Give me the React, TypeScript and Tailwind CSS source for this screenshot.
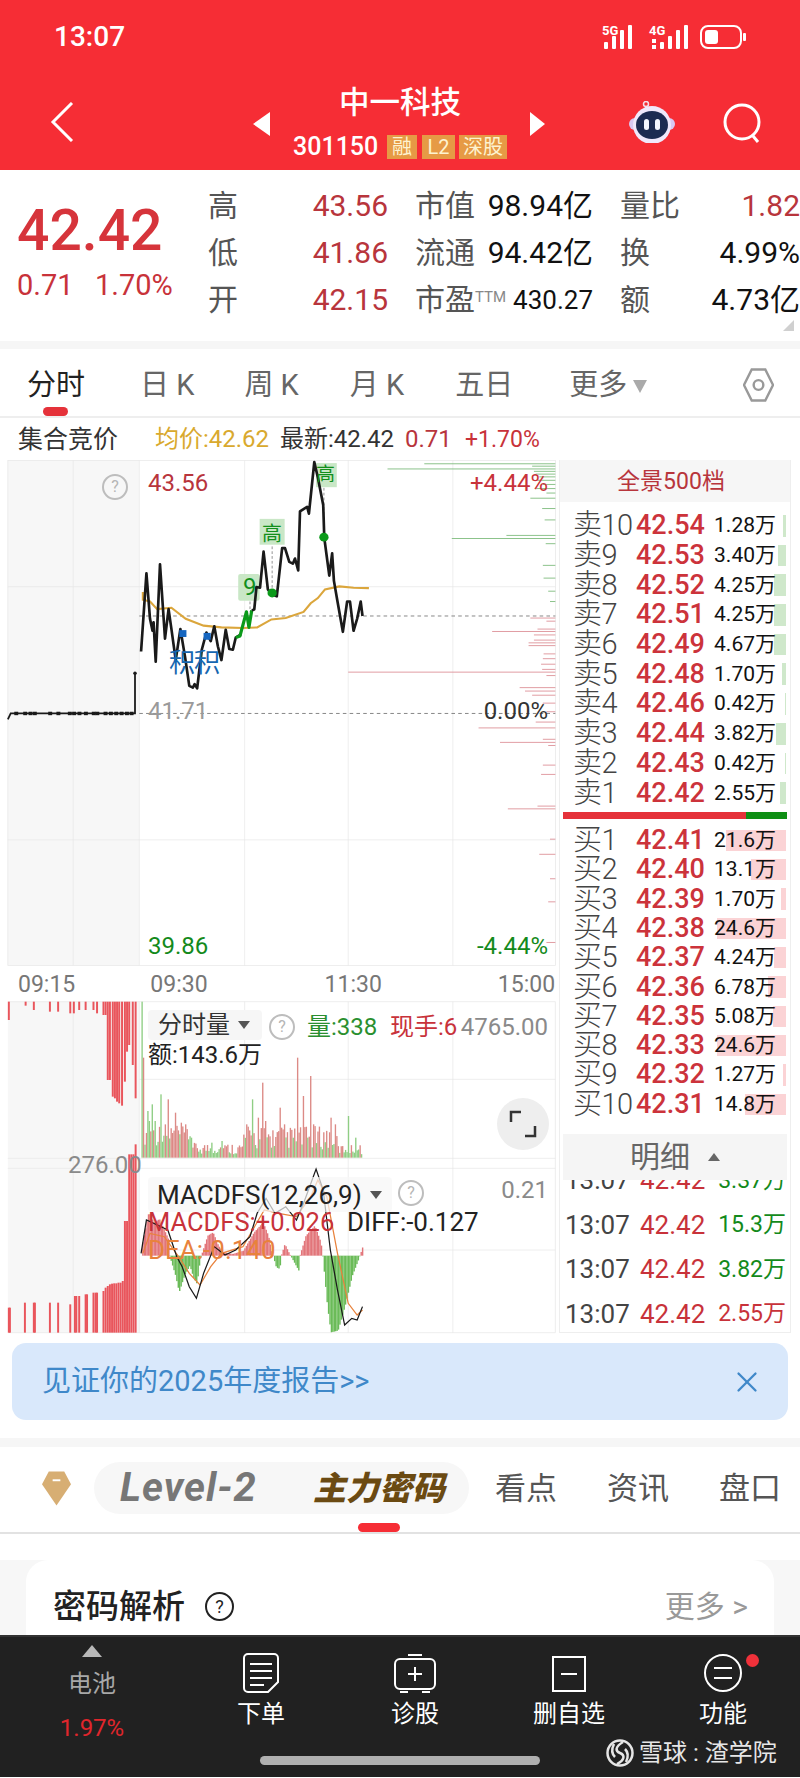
import { X } from "lucide-react"

const sells = [
  ["卖10", "42.54", "1.28万", 3],
  ["卖9", "42.53", "3.40万", 8],
  ["卖8", "42.52", "4.25万", 12],
  ["卖7", "42.51", "4.25万", 12],
  ["卖6", "42.49", "4.67万", 12],
  ["卖5", "42.48", "1.70万", 4],
  ["卖4", "42.46", "0.42万", 1],
  ["卖3", "42.44", "3.82万", 10],
  ["卖2", "42.43", "0.42万", 1],
  ["卖1", "42.42", "2.55万", 6],
] as const

const buys = [
  ["买1", "42.41", "21.6万", 60],
  ["买2", "42.40", "13.1万", 35],
  ["买3", "42.39", "1.70万", 5],
  ["买4", "42.38", "24.6万", 69],
  ["买5", "42.37", "4.24万", 12],
  ["买6", "42.36", "6.78万", 18],
  ["买7", "42.35", "5.08万", 13],
  ["买8", "42.33", "24.6万", 69],
  ["买9", "42.32", "1.27万", 3],
  ["买10", "42.31", "14.8万", 41],
] as const

// depth ticks on the right edge of the price chart: y, start x (zoomed coords)
const greenTicks = [[40, 1188], [47, 1490], [55, 1085], [62, 1495], [70, 1500], [78, 1510], [88, 1505], [100, 1520], [112, 1500], [125, 1530], [140, 1485], [170, 1518], [203, 1525], [248, 1418], [257, 1265], [272, 1528], [335, 1520], [372, 1522], [410, 1535], [440, 1540]]
const redTicks = [[488, 1485], [497, 1530], [520, 1505], [527, 1378], [537, 1495], [552, 1495], [560, 1480], [568, 1480], [592, 1522], [606, 1520], [622, 1515], [637, 1518], [645, 975], [655, 1530], [690, 1455], [700, 1470], [712, 1490], [735, 1520], [760, 1530], [790, 1500], [807, 1340], [840, 1520], [849, 1400], [858, 1535], [915, 1520], [942, 1515], [1034, 1505], [1042, 1422], [1130, 1540], [1174, 1510], [1245, 1540], [1312, 1535], [1430, 1530]]

const topBars = [[25, 55], [72, 12], [95, 25], [140, 30], [163, 30], [197, 35], [207, 35], [222, 25], [240, 25], [262, 25], [272, 35], [290, 40], [296, 40], [302, 235], [308, 235], [316, 285], [322, 290], [328, 300], [334, 305], [342, 312], [350, 240], [356, 150], [362, 130], [372, 190], [380, 290]]
const bottomBars = [[25, 75], [28, 75], [70, 90], [95, 90], [98, 90], [140, 90], [163, 90], [197, 85], [210, 110], [214, 110], [222, 110], [240, 115], [244, 115], [262, 120], [268, 120], [272, 120], [290, 125], [296, 135], [302, 140], [308, 145], [314, 147], [320, 148], [326, 148], [332, 150], [338, 150], [344, 155], [350, 335], [356, 335], [362, 535], [368, 535], [374, 535], [380, 565]]

const volPeaks: Record<number, number> = { 0: 468, 1: 300, 4: 140, 5: 110, 7: 160, 9: 110, 13: 190, 18: 175, 23: 135, 30: 100, 34: 60, 48: 45, 55: 50, 72: 100, 76: 175, 80: 120, 83: 225, 85: 110, 95: 150, 98: 100, 107: 300, 111: 185, 116: 245, 118: 100, 130: 120, 133: 100, 142: 125, 147: 60 }

const volBars = Array.from({ length: 152 }, (_, i) => {
  const seed = Math.abs(Math.sin(i * 12.9898) * 43758.5453) % 1
  const base = i < 35 ? 35 + seed * 70 : i < 70 ? 10 + seed * 35 : i < 135 ? 25 + seed * 70 : 10 + seed * 30
  return { x: 396 + i * 4.07, h: volPeaks[i] ?? base, red: seed > 0.52 }
})

const macdEnvelope = [[398, -40], [415, -130], [430, -100], [445, -110], [470, -50], [473, 0], [490, 60], [500, 110], [515, 60], [530, 30], [540, 65], [550, 85], [558, 20], [562, 0], [580, -60], [595, -70], [610, -30], [625, -10], [650, -5], [680, -15], [710, -70], [735, -100], [750, -60], [760, -10], [763, 0], [772, 35], [782, 40], [786, 0], [796, -35], [808, -8], [812, 0], [835, 45], [838, 0], [855, -60], [880, -90], [897, -40], [902, 0], [915, 150], [925, 230], [945, 225], [965, 150], [985, 60], [1003, 10], [1006, 0], [1015, -30]]

function macdAt(x: number) {
  for (let i = 1; i < macdEnvelope.length; i++) {
    const [x0, v0] = macdEnvelope[i - 1]
    const [x1, v1] = macdEnvelope[i]
    if (x <= x1) return v0 + ((v1 - v0) * (x - x0)) / (x1 - x0)
  }
  return 0
}

const macdBars = Array.from({ length: 156 }, (_, i) => {
  const x = 398 + i * 3.97
  return { x, v: macdAt(x) }
})

function Help({ className }: { className: string }) {
  return (
    <div className={`absolute flex size-[26px] items-center justify-center rounded-full border-2 border-[#bdbdbd] text-[16px] leading-none text-[#b5b5b5] ${className}`}>?</div>
  )
}

function Caret() {
  return <span className="ml-[8px] inline-block size-0 border-x-[6px] border-t-[8px] border-x-transparent border-t-[#555]" />
}

function BookRow({ row, color, h }: { row: readonly [string, string, string, number]; color: string; h: string }) {
  return (
    <div className={`relative flex items-center ${h}`}>
      <div className="absolute inset-y-[4px] right-[4px]" style={{ width: row[3], backgroundColor: color }} />
      <span className="relative w-[76px] pl-[13px] text-[29px] leading-none font-light tracking-[-0.5px] whitespace-nowrap text-[#444]">{row[0]}</span>
      <span className="relative w-[70px] text-[27px] leading-none font-medium text-[#cc333b]">{row[1]}</span>
      <span className="relative w-[70px] text-right text-[21px] leading-none text-[#111]">{row[2]}</span>
    </div>
  )
}

function Tick({ qty, qtyColor }: { qty: string; qtyColor: string }) {
  return (
    <div className="flex h-[44.5px] items-center pl-[5px]">
      <span className="w-[75px] text-[26px] leading-none text-[#444]">13:07</span>
      <span className="w-[72px] text-[26px] leading-none text-[#c8323a]">42.42</span>
      <span className="w-[74px] text-right text-[23px] leading-none" style={{ color: qtyColor }}>{qty}</span>
    </div>
  )
}

function Quote({ label, value, valueClass = "text-[#111]" }: { label: React.ReactNode; value: string; valueClass?: string }) {
  return (
    <div className="flex items-center justify-between whitespace-nowrap">
      <span className="text-[30px] leading-none text-[#555]">{label}</span>
      <span className={`text-[30px] leading-none ${valueClass}`}>{value}</span>
    </div>
  )
}

export default function App() {
  return (
    <div className="relative h-[1778px] w-[800px] overflow-hidden bg-white font-['Roboto','Noto_Sans_CJK_SC',sans-serif]">
      {/* red header */}
      <header className="relative h-[170px] bg-[#f62d35] text-white">
        <div className="flex h-[74px] items-center justify-between pr-[52px] pl-[54px]">
          <span className="text-[28px] font-medium">13:07</span>
          <svg viewBox="0 0 146 28" className="h-[28px] w-[146px]" fill="#fff">
            <text x="0" y="12" fontSize="13" fontWeight="700" fontFamily="Roboto">5G</text>
            <rect x="2" y="19" width="4" height="7" rx="1" /><rect x="10" y="13" width="4" height="13" rx="1" /><rect x="18" y="7" width="4" height="19" rx="1" /><rect x="26" y="2" width="4" height="24" rx="1" />
            <text x="47" y="12" fontSize="13" fontWeight="700" fontFamily="Roboto">4G</text>
            <rect x="50" y="16" width="4" height="4" /><rect x="50" y="22" width="4" height="4" /><rect x="58" y="19" width="4" height="7" rx="1" /><rect x="66" y="13" width="4" height="13" rx="1" /><rect x="74" y="7" width="4" height="19" rx="1" /><rect x="82" y="2" width="4" height="24" rx="1" />
            <rect x="99" y="3" width="40" height="22" rx="7" fill="none" stroke="#fff" strokeWidth="2" />
            <rect x="103" y="7" width="13" height="14" rx="3" />
            <rect x="141" y="10" width="3" height="8" rx="1" />
          </svg>
        </div>
        <svg viewBox="0 0 24 40" className="absolute top-[102px] left-[50px] h-[40px] w-[24px]" fill="none" stroke="#fff" strokeWidth="3"><path d="M22 1 3 20l19 19" /></svg>
        <div className="absolute top-[112px] left-[253px] h-0 w-0 border-y-[12px] border-r-[17px] border-y-transparent border-r-white" />
        <div className="absolute top-[112px] left-[530px] h-0 w-0 border-y-[12px] border-l-[15px] border-y-transparent border-l-white" />
        <div className="absolute top-[86px] left-[339px] text-[30.5px] leading-[34px] font-medium">中一科技</div>
        <div className="absolute top-[135px] left-[293px] flex items-center">
          <span className="w-[90px] text-[25px] leading-[24px] font-medium">301150</span>
          <span className="ml-[4px] flex h-[24px] w-[30px] items-center justify-center bg-[#e69a45] text-[20px] text-[#fdf3d0]">融</span>
          <span className="ml-[5px] flex h-[24px] w-[33px] items-center justify-center bg-[#e69a45] text-[20px] text-[#fdf3d0]">L2</span>
          <span className="ml-[4px] flex h-[24px] w-[48px] items-center justify-center bg-[#e69a45] text-[20px] text-[#fdf3d0]">深股</span>
        </div>
        <svg viewBox="0 0 48 42" className="absolute top-[101px] left-[628px] h-[42px] w-[48px]">
          <circle cx="18" cy="3" r="2.5" fill="none" stroke="#f3dfe8" strokeWidth="1.5" />
          <path d="M18 5v4" stroke="#f3dfe8" strokeWidth="2" />
          <rect x="1" y="17" width="46" height="12" rx="6" fill="#d9c8f2" />
          <circle cx="24" cy="24" r="19" fill="#f0e8fb" />
          <ellipse cx="24" cy="24" rx="16" ry="14" fill="#1d2b52" />
          <rect x="16" y="18" width="5" height="11" rx="2.5" fill="#f4f6ff" />
          <rect x="27" y="18" width="5" height="11" rx="2.5" fill="#f4f6ff" />
        </svg>
        <svg viewBox="0 0 40 40" className="absolute top-[103px] left-[723px] size-[40px]" fill="none" stroke="#fff" strokeWidth="3"><circle cx="19" cy="19" r="17" /><path d="m30 33 5 6" /></svg>
      </header>

      {/* quote summary */}
      <section className="flex h-[171px] pt-[13px]">
        <div className="w-[208px] pt-[23px] pl-[17px]">
          <div className="text-[57px] leading-[50px] font-medium text-[#d6343b]">42.42</div>
          <div className="mt-[14px] flex text-[29px] leading-[30px] text-[#c8323a]">
            <span className="w-[78px]">0.71</span>
            <span>1.70%</span>
          </div>
        </div>
        <div className="grid h-[140px] grid-cols-[180px_178px_180px] grid-rows-3 gap-x-[27px]">
          <Quote label="高" value="43.56" valueClass="text-[#b8353c]" />
          <Quote label="市值" value="98.94亿" />
          <Quote label="量比" value="1.82" valueClass="text-[#b8353c]" />
          <Quote label="低" value="41.86" valueClass="text-[#b8353c]" />
          <Quote label="流通" value="94.42亿" />
          <Quote label="换" value="4.99%" />
          <Quote label="开" value="42.15" valueClass="text-[#b8353c]" />
          <div className="flex items-center justify-between whitespace-nowrap">
            <span className="text-[30px] leading-none text-[#555]">市盈<sup className="-top-[8px] text-[15px] text-[#888]">TTM</sup></span>
            <span className="text-[26px] leading-none text-[#111]">430.27</span>
          </div>
          <Quote label="额" value="4.73亿" />
        </div>
        <div className="absolute top-[320px] left-[783px] h-0 w-0 border-b-[11px] border-l-[11px] border-b-[#d0d0d0] border-l-transparent" />
      </section>
      <div className="h-[8px] bg-[#f6f6f6]" />

      {/* period tabs */}
      <nav className="relative flex h-[69px] items-center border-b-[2px] border-[#eeeeee] pt-[6px] pl-[27px] text-[29px] leading-none text-[#666]">
        <span className="text-[#222]">分时</span>
        <span className="ml-[55px]">日 K</span>
        <span className="ml-[50px]">周 K</span>
        <span className="ml-[51px]">月 K</span>
        <span className="ml-[51px]">五日</span>
        <span className="ml-[56px]">更多</span>
        <span className="mt-[2px] ml-[6px] h-0 w-0 border-x-[7px] border-t-[13px] border-x-transparent border-t-[#aaaaaa]" />
        <svg viewBox="0 0 32 36" className="absolute top-[18px] left-[743px] h-[36px] w-[31px]" fill="none" stroke="#999" strokeWidth="2.5"><path d="M9 2h14l8 16-8 16H9L1 18Z" /><circle cx="16" cy="18" r="5" /></svg>
        <div className="absolute bottom-[0px] left-[43px] h-[9px] w-[25px] rounded-full bg-[#e5323a]" />
      </nav>

      {/* auction info */}
      <div className="flex h-[42px] items-center pl-[18px] text-[24px] leading-none whitespace-nowrap">
        <span className="w-[137px] text-[25px] text-[#333]">集合竞价</span>
        <span className="w-[125px] text-[#d9a92e]">均价:42.62</span>
        <span className="w-[125px] text-[#333]">最新:42.42</span>
        <span className="w-[60px] text-[#b8353c]">0.71</span>
        <span className="text-[23px] text-[#c8323a]">+1.70%</span>
      </div>

      <div className="flex">
        <div className="w-[557px] shrink-0">
          {/* price chart */}
          <div className="relative h-[506px]">
            <svg viewBox="0 0 1568 1568" preserveAspectRatio="none" className="absolute -top-[10px] left-0 h-[540px] w-[560px]">
              <rect x="22" y="30" width="368" height="1467" fill="#f7f7f7" />
              <g stroke="#e6e6e6" strokeWidth="2" fill="none">
                <rect x="22" y="30" width="1533" height="1467" />
                <path d="M205 30v1467M390 30v1467M685 30v1467M975 30v1467M1268 30v1467M22 397h1533M22 1132h1533" />
              </g>
              <path d="M390 482h1165M390 765h1165" stroke="#777" strokeWidth="2.5" strokeDasharray="10 9" fill="none" />
              {greenTicks.map(([y, x]) => (
                <path key={y} d={`M${x} ${y}H1555`} stroke="#7cba7a" strokeWidth="2.5" />
              ))}
              {redTicks.map(([y, x]) => (
                <path key={y} d={`M${x} ${y}H1555`} stroke="#dd8f96" strokeWidth="2.5" />
              ))}
              <rect x="727" y="200" width="70" height="75" fill="#c9e7c6" />
              <rect x="885" y="38" width="58" height="70" fill="#c9e7c6" />
              <rect x="667" y="360" width="60" height="78" rx="6" fill="#c9e7c6" />
              <path d="M762 280v130M907 110v140M700 440v30" stroke="#666" strokeWidth="2" strokeDasharray="8 6" />
              <path d="M400 412v23l20 5 20 22 40-4 40 32 50 20 50 5 60 2 40-2 40-23 40-4 50-18 20-25 20-15 20-25 40-9 40 4 43 1" fill="none" stroke="#dba63c" strokeWidth="6" />
              <path d="M395 585 410 358l10 132 7 35 3-25 6 115 12-283 14 216 10-86 8 58 12 90 13-90 13 80 12 85 10 5 5-10 7 12 13-112 13-50 12 25 10-43 10 58 10 40 12-88 10 56 10 2 8-35 15-10" fill="none" stroke="#1a1a1a" strokeWidth="7.5" strokeLinejoin="round" />
              <path d="m660 545 12-5 18-70 7 45 8-50" fill="none" stroke="#0b9a1a" strokeWidth="9" strokeLinejoin="round" />
              <path d="m705 465 7-2 6-65 10 2 10-105 12 110 12 15 13 5 15-140h8l12 40 10 5 6-15 9 35 5-172 20-13 5 20 15-150 10 45 15 80 3 95 7 55 7 55 8-65 5 80 10 60 15 88 12-88h8l10 85 10-35 10-50 5 42" fill="none" stroke="#1a1a1a" strokeWidth="7.5" strokeLinejoin="round" />
              <path d="M22 782 30 765H378V648" fill="none" stroke="#1a1a1a" strokeWidth="5" />
              {[45, 70, 85, 97, 140, 163, 195, 207, 222, 240, 262, 272, 295, 310, 325, 340, 355, 368].map((x) => (
                <rect key={x} x={x - 5} y="760" width="11" height="10" fill="#1a1a1a" />
              ))}
              <circle cx="378" cy="648" r="5" fill="#1a1a1a" />
              <circle cx="762" cy="415" r="13" fill="#0b9a1a" />
              <circle cx="907" cy="253" r="13" fill="#0b9a1a" />
              <rect x="502" y="523" width="20" height="20" fill="#1666c0" />
              <rect x="570" y="531" width="20" height="20" fill="#1666c0" />
            </svg>
            <span className="absolute top-[8px] left-[148px] text-[24px] leading-[30px] text-[#b8353c]">43.56</span>
            <span className="absolute top-[8px] right-[9px] text-[24px] leading-[30px] text-[#c8323a]">+4.44%</span>
            <span className="absolute top-[236px] left-[148px] text-[24px] leading-[30px] text-[#9a9a9a]">41.71</span>
            <span className="absolute top-[236px] right-[9px] text-[24px] leading-[30px] text-[#333]">0.00%</span>
            <span className="absolute top-[471px] left-[148px] text-[24px] leading-[30px] text-[#138a1b]">39.86</span>
            <span className="absolute top-[471px] right-[9px] text-[24px] leading-[30px] text-[#138a1b]">-4.44%</span>
            <span className="absolute top-[3px] left-[316px] text-[19px] leading-[24px] text-[#128f1c]">高</span>
            <span className="absolute top-[62px] left-[262px] text-[20px] leading-[24px] text-[#128f1c]">高</span>
            <span className="absolute top-[115px] left-[243px] text-[24px] leading-[24px] text-[#128f1c]">9</span>
            <span className="absolute top-[189px] left-[169px] text-[26px] leading-[28px] tracking-[-1px] text-[#1666b0]">积积</span>
            <Help className="top-[14px] left-[102px]" />
          </div>

          {/* time axis */}
          <div className="flex h-[36px] items-center pl-[18px] text-[23px] leading-none text-[#777]">
            <span>09:15</span>
            <span className="ml-[75px]">09:30</span>
            <span className="ml-[117px]">11:30</span>
            <span className="ml-[116px]">15:00</span>
          </div>

          {/* volume and macd */}
          <div className="relative h-[331px]">
            <svg viewBox="0 0 1568 1050" preserveAspectRatio="none" className="absolute -top-[12px] left-0 h-[350px] w-[560px]">
              <rect x="22" y="35" width="368" height="993" fill="#f7f7f7" />
              <g stroke="#e6e6e6" strokeWidth="2" fill="none">
                <path d="M22 35h1533M390 268h1165M22 505h1533M22 535h1533M390 780h1165M22 1028h1533" />
                <path d="M205 35v993M390 35v993M685 35v993M975 35v993M1268 35v993M1555 35v993" />
              </g>
              {topBars.map(([x, h]) => (
                <rect key={x} x={x - 3} y="35" width="5.5" height={h} fill="#e9555c" />
              ))}
              {bottomBars.map(([x, h]) => (
                <rect key={x} x={x - 3} y={1028 - h} width="5.5" height={h} fill="#e9555c" />
              ))}
              {volBars.map((b) => (
                <rect key={b.x} x={b.x} y={503 - b.h} width="3.8" height={b.h} fill={b.red ? "#dc8a86" : "#8fce84"} />
              ))}
              {macdBars.map((b) => (
                <rect key={b.x} x={b.x} y={b.v < 0 ? 797 + b.v : 797} width="4" height={Math.abs(b.v)} fill={b.v < 0 ? "#e2757a" : "#6abb58"} />
              ))}
              <path d="M400 790 420 730l40 10 40 60 30 50 30 35 30-55 30-40 60-20 60-110 40 10 50 10 40-60 20-50 25 50 30 170 30 150 25 35 15-15" fill="none" stroke="#e8823c" strokeWidth="3.5" />
              <path d="M395 790 410 690l20 10 40 20 25 80 15 30 20 60 20 35 20-75 30-80 30 25 30-15 40-40 20-70 25-45 25 45 30-20 30 40 20-50 35-103 20 63 20 180 20 120 20 105 20-20 15 5 15-40" fill="none" stroke="#1a1a1a" strokeWidth="3.5" />
            </svg>
            <div className="absolute top-[8px] left-[148px] flex h-[30px] w-[114px] items-center rounded-[4px] bg-[#f6f6f6] pl-[10px] text-[24px] leading-none text-[#333]">分时量<Caret /></div>
            <Help className="top-[12px] left-[269px]" />
            <span className="absolute top-[10px] left-[307px] text-[24px] leading-[30px] text-[#2a8f2f]">量:338</span>
            <span className="absolute top-[10px] left-[390px] text-[24px] leading-[30px] text-[#c8323a]">现手:6</span>
            <span className="absolute top-[10px] right-[9px] text-[24px] leading-[30px] text-[#8a8a8a]">4765.00</span>
            <span className="absolute top-[38px] left-[148px] text-[24px] leading-[30px] text-[#222]">额:143.6万</span>
            <div className="absolute top-[96px] left-[497px] flex size-[52px] items-center justify-center rounded-full bg-[#eeeeee]">
              <svg viewBox="0 0 28 28" className="size-[28px]" fill="none" stroke="#333" strokeWidth="2.5"><path d="M12 2H2v10M16 26h10V16" /></svg>
            </div>
            <span className="absolute top-[148px] left-[68px] text-[24px] leading-[30px] text-[#8a8a8a]">276.00</span>
            <div className="absolute top-[175px] left-[148px] flex h-[35px] w-[244px] items-center rounded-[4px] bg-[#f6f6f6]/70 pl-[9px] text-[26px] leading-none text-[#222]">MACDFS(12,26,9)<Caret /></div>
            <Help className="top-[178px] left-[398px]" />
            <span className="absolute top-[173px] right-[9px] text-[24px] leading-[30px] text-[#8a8a8a]">0.21</span>
            <span className="absolute top-[205px] left-[148px] text-[25.5px] leading-[30px] text-[#c8323a]">MACDFS:+0.026</span>
            <span className="absolute top-[205px] left-[347px] text-[26px] leading-[30px] text-[#222]">DIFF:-0.127</span>
            <span className="absolute top-[233px] left-[148px] text-[26px] leading-[30px] text-[#e8823c]">DEA:-0.140</span>
          </div>
        </div>

        {/* order book */}
        <aside className="ml-[2px] h-[873px] w-[232px] border-x border-b border-[#eeeeee]">
          <div className="flex h-[42px] items-center justify-center bg-[#f6f6f6] pr-[8px] text-[23px] leading-none text-[#b8353c]">全景500档</div>
          <div className="pt-[9px]">
            {sells.map((row) => (
              <BookRow key={row[0]} row={row} color="#cfe8cb" h="h-[29.7px]" />
            ))}
          </div>
          <div className="mx-[3px] mt-[4px] flex h-[7px] w-[224px]">
            <div className="w-[183px] bg-[#e5323a]" />
            <div className="flex-1 bg-[#0e8f14]" />
          </div>
          <div className="pt-[7px]">
            {buys.map((row) => (
              <BookRow key={row[0]} row={row} color="#fbd3d5" h="h-[29.3px]" />
            ))}
          </div>
          <div className="relative z-10 mx-[3px] mt-[15px] flex h-[46px] items-center justify-center bg-[#f5f5f5] text-[30px] leading-none text-[#666]">
            明细
            <span className="ml-[18px] h-0 w-0 border-x-[6px] border-b-[8px] border-x-transparent border-b-[#666]" />
          </div>
          <div className="h-[150px] overflow-hidden">
            <div className="-mt-[22px]">
              <Tick qty="3.37万" qtyColor="#138a1b" />
              <Tick qty="15.3万" qtyColor="#138a1b" />
              <Tick qty="3.82万" qtyColor="#138a1b" />
              <Tick qty="2.55万" qtyColor="#c8323a" />
            </div>
          </div>
        </aside>
      </div>

      {/* annual report banner */}
      <div className="mx-[12px] mt-[10px] flex h-[77px] items-center justify-between rounded-[14px] bg-[#d9e8fb] pr-[24px] pl-[30px]">
        <span className="text-[29px] leading-none text-[#3f88c9]">见证你的2025年度报告&gt;&gt;</span>
        <X size={34} strokeWidth={1.6} className="text-[#3f88c9]" />
      </div>
      <div className="mt-[18px] h-[9px] bg-[#f6f6f6]" />

      {/* level 2 tabs */}
      <div className="relative flex h-[87px] items-center border-b-[2px] border-[#e2e2e2] pb-[3px]">
        <svg viewBox="0 0 30 36" className="ml-[42px] h-[36px] w-[29px]"><path d="M7 1h16l7 13-15 22L0 14Z" fill="#d7ae73" /><rect x="11" y="9" width="8" height="2" fill="#fff" /></svg>
        <div className="ml-[23px] flex h-[52px] w-[375px] items-center rounded-full bg-[#f7f7f7] pl-[26px]">
          <span className="w-[193px] text-[40px] leading-none font-bold tracking-[1px] text-[#777] italic">Level-2</span>
          <span className="text-[33px] leading-none font-black text-[#6b4a12] italic">主力密码</span>
        </div>
        <span className="ml-[26px] text-[31px] leading-none text-[#555]">看点</span>
        <span className="ml-[50px] text-[31px] leading-none text-[#555]">资讯</span>
        <span className="ml-[50px] text-[31px] leading-none text-[#555]">盘口</span>
        <div className="absolute bottom-0 left-[358px] h-[9px] w-[42px] rounded-full bg-[#f62d35]" />
      </div>

      {/* analysis card */}
      <div className="h-[101px] overflow-hidden pt-[26px]">
        <div className="h-[75px] bg-[#f7f7f7] px-[26px]">
          <div className="flex h-[120px] items-start rounded-t-[22px] bg-white pt-[29px] pr-[26px] pl-[27px]">
            <span className="text-[33px] leading-[36px] font-medium text-[#222]">密码解析</span>
            <span className="mt-[3px] ml-[20px] flex size-[29px] items-center justify-center rounded-full border-[2.5px] border-[#222] text-[18px] leading-none text-[#222]">?</span>
            <span className="ml-auto text-[30px] leading-[36px] text-[#999]">更多 &gt;</span>
          </div>
        </div>
      </div>

      {/* bottom bar */}
      <footer className="relative h-[142px] border-t-[2px] border-[#333] bg-[#212121] text-[24px] leading-none text-white">
        <div className="absolute top-[8px] left-[32px] flex w-[120px] flex-col items-center">
          <span className="h-0 w-0 border-x-[10px] border-b-[12px] border-x-transparent border-b-[#b8b8b8]" />
          <span className="mt-[15px] text-[#a8a8a8]">电池</span>
          <span className="mt-[20px] text-[#e0262c]">1.97%</span>
        </div>
        <div className="absolute top-[16px] left-[201px] flex w-[120px] flex-col items-center">
          <svg viewBox="0 0 36 40" className="h-[40px] w-[36px]" fill="none" stroke="#fff" strokeWidth="2"><path d="M5 1h26a4 4 0 0 1 4 4v24l-10 10H5a4 4 0 0 1-4-4V5a4 4 0 0 1 4-4Z" /><path d="M7 11h22M7 18h22M7 25h22M7 32h14" /></svg>
          <span className="mt-[9px]">下单</span>
        </div>
        <div className="absolute top-[16px] left-[355px] flex w-[120px] flex-col items-center">
          <svg viewBox="0 0 42 40" className="h-[40px] w-[42px]" fill="none" stroke="#fff" strokeWidth="2"><path d="M14 2h14" /><rect x="1" y="6" width="40" height="30" rx="5" /><path d="M21 14v14M14 21h14M6 39h8M28 39h8" /></svg>
          <span className="mt-[9px]">诊股</span>
        </div>
        <div className="absolute top-[16px] left-[509px] flex w-[120px] flex-col items-center">
          <svg viewBox="0 0 36 40" className="h-[40px] w-[36px]" fill="none" stroke="#fff" strokeWidth="2"><rect x="2" y="4" width="32" height="34" /><path d="M10 21h16" /></svg>
          <span className="mt-[9px]">删自选</span>
        </div>
        <div className="absolute top-[16px] left-[663px] flex w-[120px] flex-col items-center">
          <svg viewBox="0 0 40 40" className="h-[40px] w-[40px]" fill="none" stroke="#fff" strokeWidth="2"><circle cx="20" cy="20" r="18" /><path d="M11 15h18M11 25h18" /></svg>
          <span className="mt-[9px]">功能</span>
        </div>
        <div className="absolute top-[17px] left-[746px] size-[13px] rounded-full bg-[#f0313a]" />
        <div className="absolute top-[102px] left-[606px] flex items-center text-[#e6e6e6]">
          <svg viewBox="0 0 28 28" className="size-[28px]" fill="none" stroke="#e6e6e6" strokeWidth="2.5"><circle cx="14" cy="14" r="12.5" /><path d="M17 3C9 8 9 12 14 14s5 7-3 11M8 5c-3 6-2 10 1 13M20 23c3-6 2-10-1-13" /></svg>
          <span className="ml-[5px] text-[24px]">雪球 : 渣学院</span>
        </div>
        <div className="absolute top-[119px] left-[260px] h-[9px] w-[280px] rounded-full bg-[#b0b0b0]" />
      </footer>
    </div>
  )
}
